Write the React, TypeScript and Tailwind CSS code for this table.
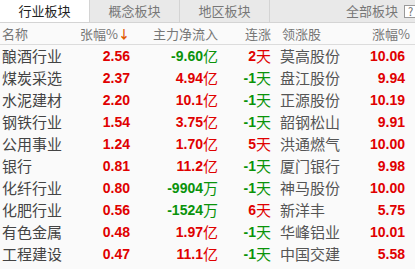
import React from "react";

type Row = {
  name: string;
  pct: string;
  flow: string;
  unit: string;
  days: string;
  leader: string;
  lpct: string;
};

const rows: Row[] = [
  { name: "酿酒行业", pct: "2.56", flow: "-9.60", unit: "亿", days: "2", leader: "莫高股份", lpct: "10.06" },
  { name: "煤炭采选", pct: "2.37", flow: "4.94", unit: "亿", days: "-1", leader: "盘江股份", lpct: "9.94" },
  { name: "水泥建材", pct: "2.20", flow: "10.1", unit: "亿", days: "-1", leader: "正源股份", lpct: "10.19" },
  { name: "钢铁行业", pct: "1.54", flow: "3.75", unit: "亿", days: "-1", leader: "韶钢松山", lpct: "9.91" },
  { name: "公用事业", pct: "1.24", flow: "1.70", unit: "亿", days: "5", leader: "洪通燃气", lpct: "10.00" },
  { name: "银行", pct: "0.81", flow: "11.2", unit: "亿", days: "-1", leader: "厦门银行", lpct: "9.98" },
  { name: "化纤行业", pct: "0.80", flow: "-9904", unit: "万", days: "-1", leader: "神马股份", lpct: "10.00" },
  { name: "化肥行业", pct: "0.56", flow: "-1524", unit: "万", days: "6", leader: "新洋丰", lpct: "5.75" },
  { name: "有色金属", pct: "0.48", flow: "1.97", unit: "亿", days: "-1", leader: "华峰铝业", lpct: "10.01" },
  { name: "工程建设", pct: "0.47", flow: "11.1", unit: "亿", days: "-1", leader: "中国交建", lpct: "5.58" },
];

const cjk = "font-['Noto_Sans_CJK_SC',sans-serif]";
const num = "font-['Liberation_Sans',Arial,sans-serif] font-bold text-[14px]";
const RED = "text-[#e00000]";
const GREEN = "text-[#0a930a]";

const Tab = ({ label, active }: { label: string; active?: boolean }) => (
  <div
    className={`w-[90px] flex items-center justify-center border-r border-[#d4d4d4] text-[13px] ${
      active ? "bg-white text-[#222]" : "bg-[#e9e9e9] text-[#777]"
    }`}
  >
    {label}
  </div>
);

export default function App() {
  return (
    <div className={`w-[415px] h-[269px] overflow-hidden bg-[#fafafa] ${cjk}`}>
      {/* tabs */}
      <div className="flex h-[23px] border-b border-[#d4d4d4] bg-[#e9e9e9]">
        <Tab label="行业板块" active />
        <Tab label="概念板块" />
        <Tab label="地区板块" />
        <div className="flex-1 flex items-center justify-end text-[13px] text-[#777]">
          <span className="mr-[6px]">全部板块</span>
          <span className="w-[13px] h-[13px] -mr-[2px] border border-[#999] bg-white text-[11px] leading-[11px] text-center text-[#666]">?</span>
        </div>
      </div>

      {/* header */}
      <div className="flex h-[22px] items-center border-b border-[#dcdcdc] text-[13px] text-[#777] whitespace-nowrap">
        <div className="w-[88px] pl-[2px]">名称</div>
        <div className="w-[42px] flex justify-end items-center whitespace-nowrap">
          <span>张幅%</span>
          <span className="text-[#e05a00] text-[12px] font-bold leading-none">↓</span>
        </div>
        <div className="w-[88px] text-right">主力净流入</div>
        <div className="w-[53px] text-right">连涨</div>
        <div className="w-[74px] pl-[11px]">领涨股</div>
        <div className="w-[65px] text-right">涨幅%</div>
      </div>

      {/* rows */}
      {rows.map((r) => {
        const flowColor = r.flow.startsWith("-") ? GREEN : RED;
        const dayColor = r.days.startsWith("-") ? GREEN : RED;
        return (
          <div key={r.name} className="flex h-[22px] items-center whitespace-nowrap">
            <div className="w-[88px] pl-[2px] text-[15px] text-[#444]">{r.name}</div>
            <div className={`w-[42px] text-right ${num} ${RED}`}>{r.pct}</div>
            <div className={`w-[88px] flex justify-end items-center ${flowColor}`}>
              <span className={num}>{r.flow}</span>
              <span className="text-[15px] w-[15px]">{r.unit}</span>
            </div>
            <div className={`w-[53px] flex justify-end items-center ${dayColor}`}>
              <span className={num}>{r.days}</span>
              <span className="text-[15px]">天</span>
            </div>
            <div className="w-[74px] pl-[9px] text-[15px] text-[#555]">{r.leader}</div>
            <div className={`w-[60px] text-right ${num} ${RED}`}>{r.lpct}</div>
          </div>
        );
      })}
    </div>
  );
}
